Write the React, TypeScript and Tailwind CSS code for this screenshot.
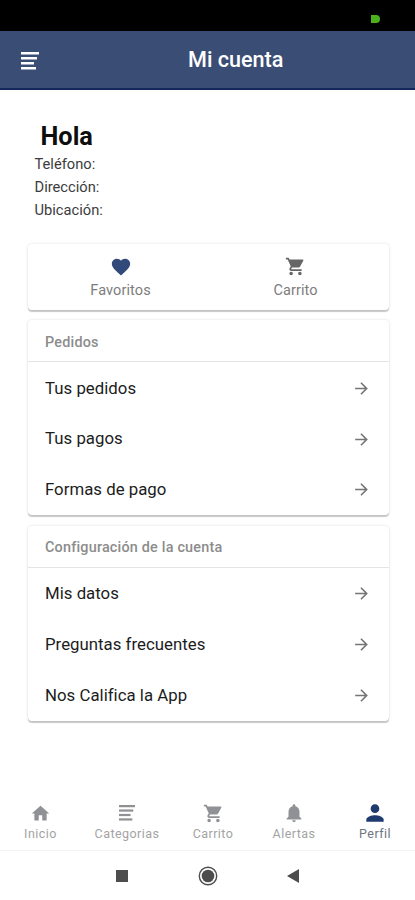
import type { ReactNode } from "react";
import {
  MdArrowForward,
  MdFavorite,
  MdHome,
  MdNotifications,
  MdPerson,
  MdShoppingCart,
} from "react-icons/md";

function LinesIcon({ className }: { className?: string }) {
  return (
    <svg viewBox="0 0 18 18" className={className} fill="currentColor">
      <rect x="0" y="0" width="18" height="2.5" />
      <rect x="0" y="5" width="16" height="2.5" />
      <rect x="0" y="10" width="13" height="2.5" />
      <rect x="0" y="15" width="15" height="2.5" />
    </svg>
  );
}

const cardClass =
  "rounded-[4px] bg-white shadow-[0_2px_1px_rgba(0,0,0,0.2),0_0_3px_rgba(0,0,0,0.13)]";

function MenuCard({ title, items }: { title: string; items: string[] }) {
  return (
    <section className={`${cardClass} h-[195px]`}>
      <h2 className="flex h-[42px] items-center border-b border-[#e4e4e4] px-[17px] pt-[4px] text-[14.4px] font-medium tracking-[0.2px] text-[#8c8c8c]">
        {title}
      </h2>
      <ul>
        {items.map((item) => (
          <li key={item} className="flex h-[50.7px] items-center justify-between pr-[18px] pl-[17px] pt-[2px]">
            <span className="text-[16.8px] tracking-[0.02px] text-[#1c1c1c]">{item}</span>
            <MdArrowForward className="size-[19px] text-[#757575]" />
          </li>
        ))}
      </ul>
    </section>
  );
}

function Tab({ icon, label, width, active }: { icon: ReactNode; label: string; width: string; active?: boolean }) {
  return (
    <div className={`flex flex-col items-center ${width} ${active ? "text-[#1f3a6e]" : "text-[#8f9194]"}`}>
      <div className="flex h-[22px] items-center">{icon}</div>
      <span className={`mt-[2px] text-[12.5px] leading-[16px] tracking-[0.45px] ${active ? "text-[#6e7580]" : "text-[#a3a3a3]"}`}>
        {label}
      </span>
    </div>
  );
}

export default function App() {
  return (
    <div className="flex h-[900px] w-[415px] flex-col overflow-hidden bg-white font-['Roboto',sans-serif]">
      <div className="flex h-[31px] items-start justify-end bg-black pt-[15px] pr-[35px]">
        <div className="h-[8px] w-[9px] rounded-l-[3px] rounded-r-full bg-[#4caf1f]" />
      </div>

      <header className="flex h-[59px] items-center border-b-2 border-[#14285c] bg-[#3a4d74] pl-[21px] text-white">
        <LinesIcon className="mt-[2px] size-[18px]" />
        <h1 className="ml-[149px] pt-[1px] text-[21.6px] font-medium">Mi cuenta</h1>
      </header>

      <main className="flex flex-1 flex-col pr-[26px] pl-[28px]">
        <div className="h-[154px] pt-[31px] pl-[6.5px]">
          <h2 className="pl-[6px] text-[25.3px] leading-[31.5px] font-bold text-[#0e0e0e]">Hola</h2>
          <div className="text-[14.7px] leading-[23.3px] text-[#3c3c3c]">
            <p>Teléfono:</p>
            <p>Dirección:</p>
            <p>Ubicación:</p>
          </div>
        </div>

        <div className="flex flex-col gap-[10.5px]">
          <section className={`${cardClass} flex h-[65.5px] pl-[5px]`}>
            <div className="flex w-[175px] flex-col items-center pt-[12px] text-[14.5px] tracking-[0.1px] text-[#7d7d7d]">
              <MdFavorite className="size-[22px] text-[#324a7a]" />
              <span className="leading-[25px]">Favoritos</span>
            </div>
            <div className="flex w-[175px] flex-col items-center pt-[12px] text-[14.5px] tracking-[0.1px] text-[#7d7d7d]">
              <MdShoppingCart className="size-[21px] text-[#666]" />
              <span className="leading-[27px]">Carrito</span>
            </div>
          </section>

          <MenuCard title="Pedidos" items={["Tus pedidos", "Tus pagos", "Formas de pago"]} />
          <MenuCard
            title="Configuración de la cuenta"
            items={["Mis datos", "Preguntas frecuentes", "Nos Califica la App"]}
          />
        </div>
      </main>

      <nav className="flex h-[49px] border-b border-[#f3f3f3] text-[#8f9194]">
        <Tab width="w-[81px]" label="Inicio" icon={<MdHome className="size-[21px]" />} />
        <Tab width="w-[92px]" label="Categorias" icon={<LinesIcon className="size-[16px]" />} />
        <Tab width="w-[80px]" label="Carrito" icon={<MdShoppingCart className="size-[21px]" />} />
        <Tab width="w-[82px]" label="Alertas" icon={<MdNotifications className="size-[22px]" />} />
        <Tab width="w-[80px]" label="Perfil" icon={<MdPerson className="size-[26px]" />} active />
      </nav>

      <footer className="flex h-[49px] items-center pl-[116px] text-[#4d4d4d]">
        <div className="size-[12px] bg-[#4d4d4d]" />
        <svg viewBox="0 0 20 20" className="ml-[70px] size-[20px]">
          <circle cx="10" cy="10" r="8.7" fill="none" stroke="currentColor" strokeWidth="1.4" />
          <circle cx="10" cy="10" r="6.3" fill="currentColor" />
        </svg>
        <svg viewBox="0 0 12 14" className="ml-[69px] h-[14px] w-[12px]">
          <path d="M12 0v14L0 7z" fill="currentColor" />
        </svg>
      </footer>
    </div>
  );
}
